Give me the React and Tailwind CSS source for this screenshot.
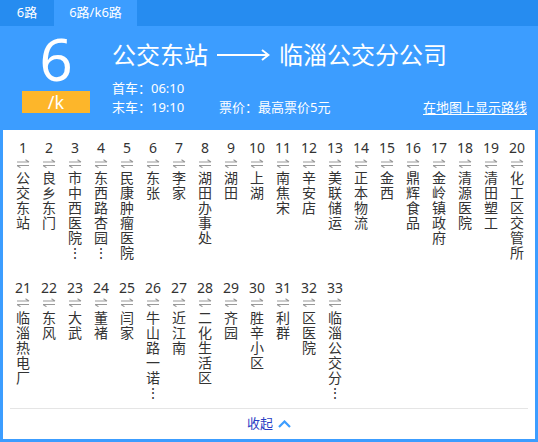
import React from "react";

const stops = [
  "公交东站", "良乡东门", "市中西医院…", "东西路杏园…", "民康肿瘤医院", "东张", "李家", "湖田办事处", "湖田", "上湖",
  "南焦宋", "辛安店", "美联储运", "正本物流", "金西", "鼎辉食品", "金岭镇政府", "清源医院", "清田塑工", "化工区交管所",
  "临淄热电厂", "东风", "大武", "董褚", "闫家", "牛山路一诺…", "近江南", "二化生活区", "齐园", "胜辛小区",
  "利群", "区医院", "临淄公交分…",
];

function Arrows() {
  return (
    <svg width="14" height="9" viewBox="0 0 14 9" fill="none" stroke="#999999" strokeWidth="1.1">
      <path d="M1 3H13M13 3L9.5 0.8" />
      <path d="M1 6.5H13M1 6.5L4.5 8.7" />
    </svg>
  );
}

function Stop({ n, name }) {
  const chars = Array.from(name);
  return (
    <div className="w-[26px] flex flex-col items-center">
      <div className="text-[14px] leading-[16px] text-[#333]">{n}</div>
      <div className="h-[14px] flex items-center justify-center">
        <Arrows />
      </div>
      <div className="flex flex-col items-center text-[14px] leading-[15px] text-[#333]">
        {chars.map((c, i) => (
          <span key={i} className="block h-[15px]">{c === "…" ? "⋮" : c}</span>
        ))}
      </div>
    </div>
  );
}

export default function App() {
  return (
    <div
      className="w-[538px] h-[442px] bg-white overflow-hidden"
      style={{ fontFamily: '"Noto Sans", "Noto Sans CJK SC", sans-serif' }}
    >
      {/* tabs */}
      <div className="h-[26px] bg-[#268cf0] flex text-white text-[13px]">
        <div className="w-[54px] flex items-center justify-center">6路</div>
        <div className="w-[83px] bg-[#3c9dff] flex items-center justify-center">6路/k6路</div>
      </div>

      {/* header */}
      <div className="h-[104px] bg-[#3c9dff] flex pl-[22px] pr-[11px] pt-[4px] text-white">
        <div className="w-[68px] flex flex-col items-center">
          <div className="h-[58px] flex items-center text-[58px] leading-[58px]">6</div>
          <div className="mt-[3px] w-[68px] h-[22px] bg-[#fdb62a] flex items-center justify-center text-[18px] leading-[22px]">
            /k
          </div>
        </div>
        <div className="ml-[22px] flex-1 flex flex-col">
          <div className="mt-[10px] h-[30px] flex items-center text-[24px] leading-[30px]">
            <span>公交东站</span>
            <span className="mx-[9px] flex items-center">
              <svg width="53" height="14" viewBox="0 0 53 14" fill="none" stroke="white" strokeWidth="2">
                <path d="M0 7H51" />
                <path d="M45 2L51.5 7L45 12" />
              </svg>
            </span>
            <span>临淄公交分公司</span>
          </div>
          <div className="mt-[9px] text-[13px] leading-[19px]">首车：06:10</div>
          <div className="flex text-[13px] leading-[19px]">
            <span className="w-[107px]">末车：19:10</span>
            <span>票价：最高票价5元</span>
            <span className="ml-auto underline underline-offset-2">在地图上显示路线</span>
          </div>
        </div>
      </div>

      {/* body */}
      <div className="h-[312px] border-x-[3px] border-b-[3px] border-[#3c9dff] flex flex-col">
        <div className="pl-[7px] pt-[10px] flex flex-wrap gap-y-[11px] h-[278px]">
          {stops.map((s, i) => (
            <Stop key={i} n={i + 1} name={s} />
          ))}
        </div>
        <div className="mx-[7px] h-px bg-[#e5e5e5]" />
        <div className="flex-1 flex items-center justify-center gap-[5px] text-[13px] text-[#2a3ec4]">
          <span>收起</span>
          <svg width="13" height="8" viewBox="0 0 13 8" fill="none" stroke="#3c9dff" strokeWidth="2.2">
            <path d="M1 7L6.5 1.5L12 7" />
          </svg>
        </div>
      </div>
    </div>
  );
}
